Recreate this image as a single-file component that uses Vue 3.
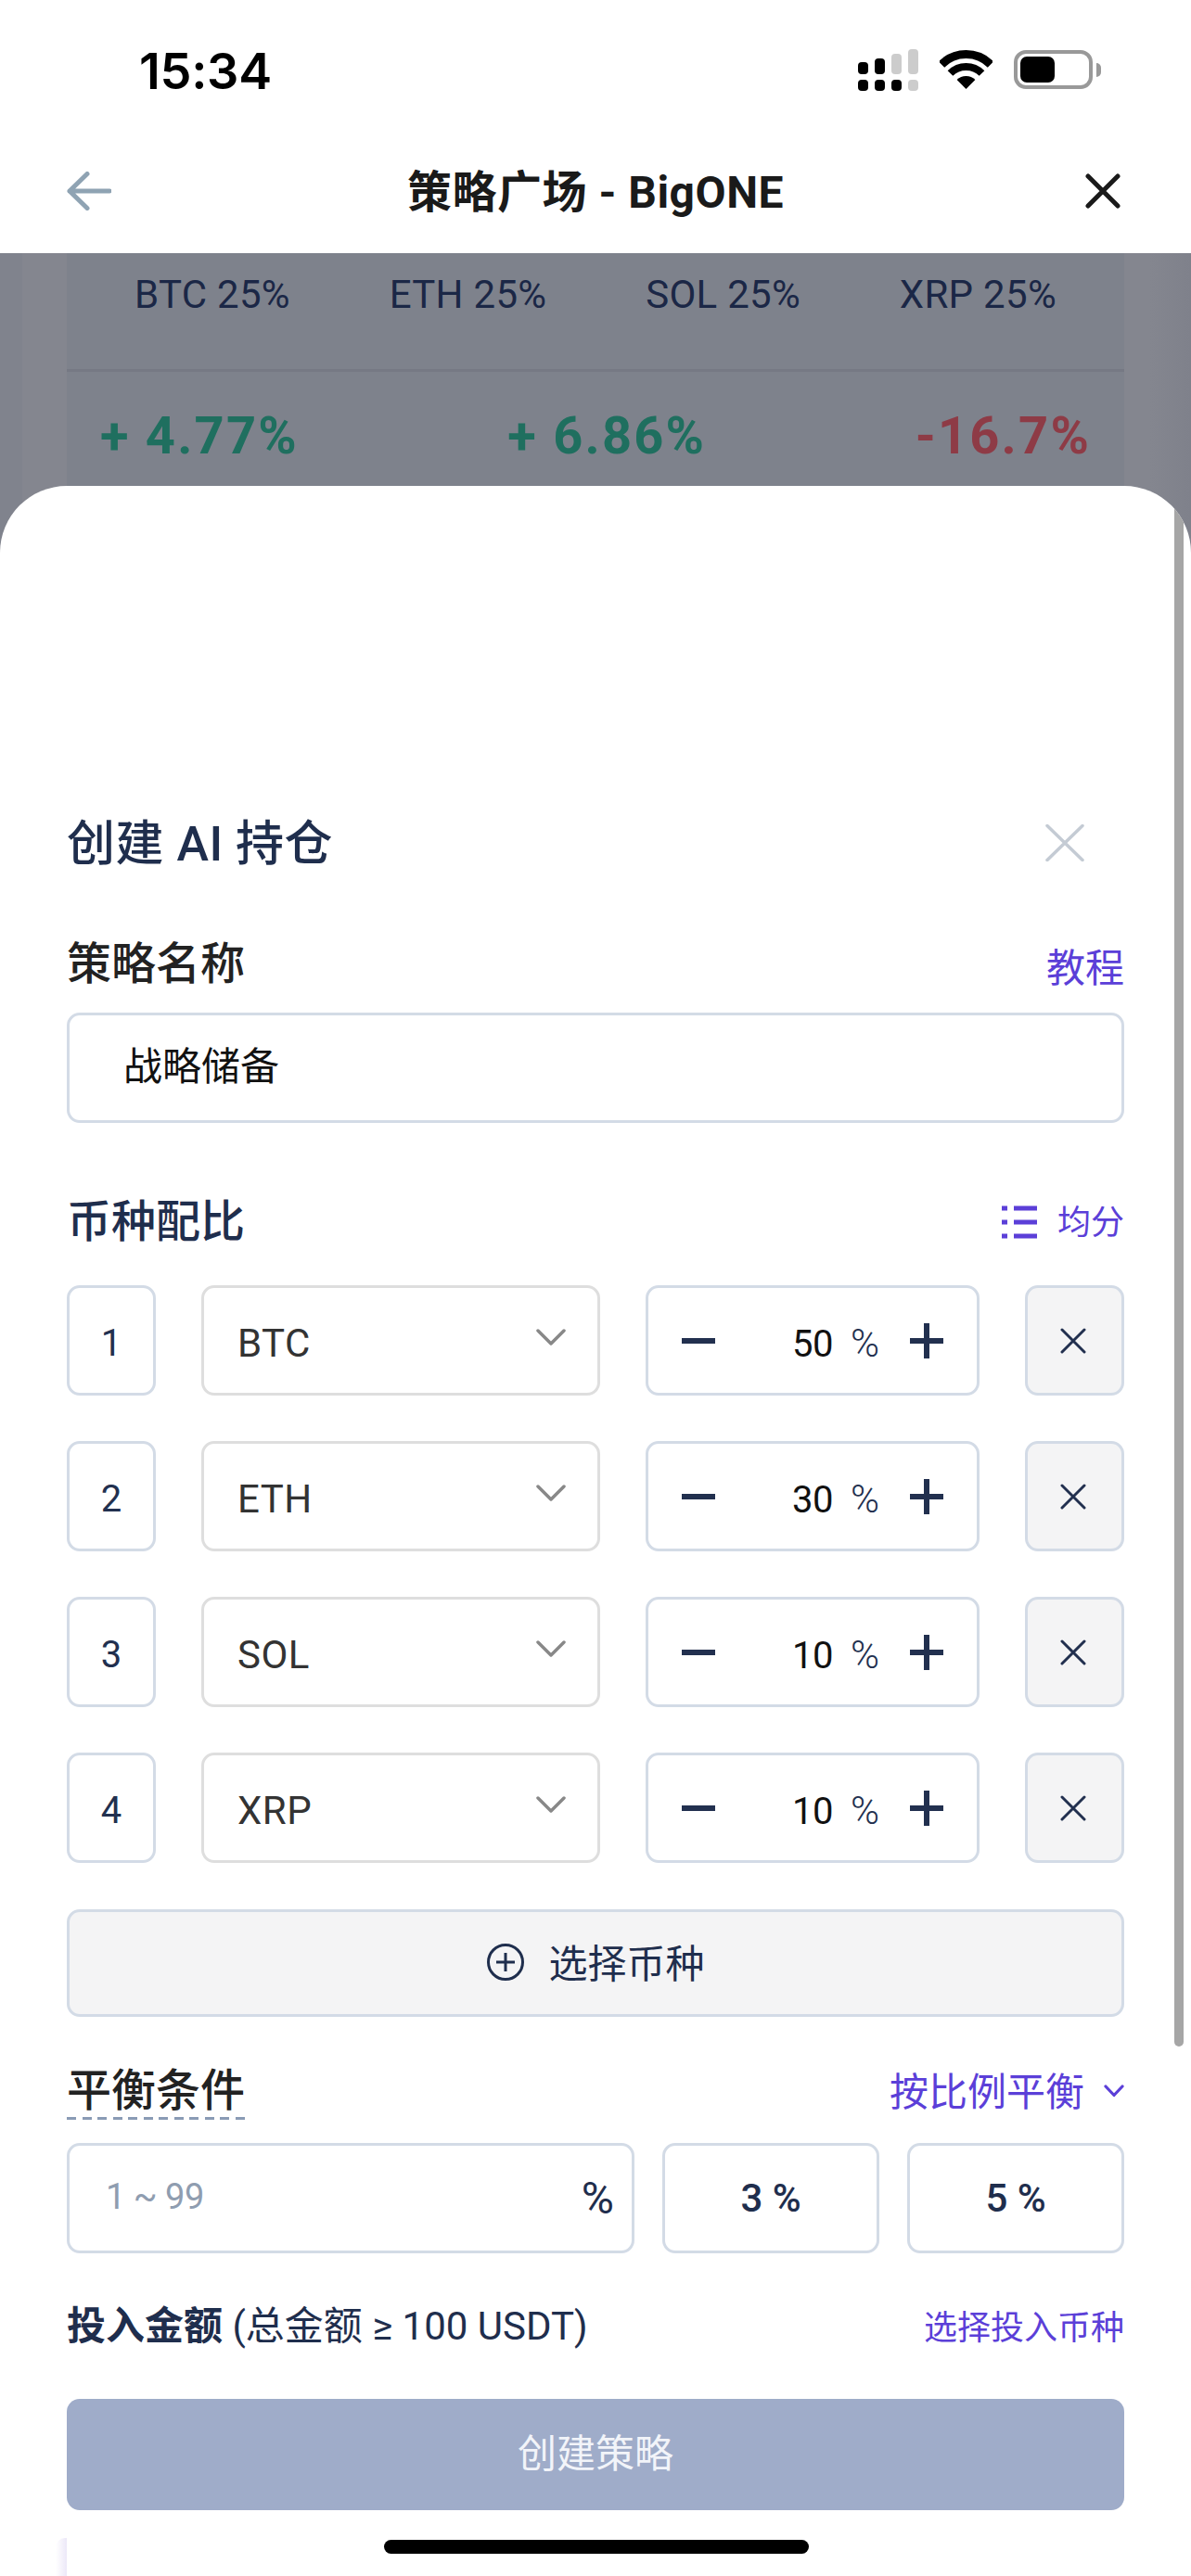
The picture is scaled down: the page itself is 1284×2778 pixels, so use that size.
<script setup>
const headers = ['BTC 25%', 'ETH 25%', 'SOL 25%', 'XRP 25%']
const returns = [
  { text: '+ 4.77%', up: true },
  { text: '+ 6.86%', up: true },
  { text: '-16.7%', up: false }
]
const coins = [
  { n: 1, name: 'BTC', pct: 50 },
  { n: 2, name: 'ETH', pct: 30 },
  { n: 3, name: 'SOL', pct: 10 },
  { n: 4, name: 'XRP', pct: 10 }
]
const signal = [
  { h: 13, on: true }, { h: 17, on: true }, { h: 22, on: false }, { h: 27, on: false }
]
const lower = [true, true, true, false]
</script>

<template>
  <div class="screen">
    <header class="top">
      <div class="status">
        <span class="time">15:34</span>
        <div class="status-icons">
          <div class="signal">
            <div v-for="(s, i) in signal" :key="i" class="sig-col">
              <i class="sig-top" :class="{ off: !s.on }" :style="{ height: s.h + 'px' }"></i>
              <i class="sig-bottom" :class="{ off: !lower[i] }"></i>
            </div>
          </div>
          <svg class="wifi" width="57" height="42" viewBox="0 0 57 42">
            <path d="M2 15.5A37.5 37.5 0 0 1 55 15.5" fill="none" stroke="#000" stroke-width="9" />
            <path d="M11.5 25A24 24 0 0 1 45.5 25" fill="none" stroke="#000" stroke-width="8" />
            <path d="M28.5 42L18.6 32.1A14 14 0 0 1 38.4 32.1Z" fill="#000" />
          </svg>
          <div class="battery">
            <div class="battery-body"><i class="battery-fill"></i></div>
            <i class="battery-nub"></i>
          </div>
        </div>
      </div>
      <div class="nav">
        <svg class="back" width="48" height="42" viewBox="0 0 48 42">
          <path d="M46 21H3M22 2.5L3 21l19 18.5" fill="none" stroke="#8fa3b3" stroke-width="5" stroke-linecap="round" stroke-linejoin="round" />
        </svg>
        <span class="nav-title">策略广场 - BigONE</span>
        <svg class="nav-close" width="38" height="38" viewBox="0 0 38 38">
          <path d="M3 3l32 32M35 3L3 35" stroke="#1a1a1a" stroke-width="5" stroke-linecap="round" />
        </svg>
      </div>
    </header>

    <section class="backdrop">
      <div class="back-table">
        <div class="th-row">
          <span v-for="h in headers" :key="h">{{ h }}</span>
        </div>
        <div class="td-row">
          <span v-for="r in returns" :key="r.text" :class="r.up ? 'up' : 'down'">{{ r.text }}</span>
        </div>
      </div>
    </section>

    <section class="sheet">
      <i class="scrollbar"></i>
      <div class="sheet-head">
        <h2>创建 AI 持仓</h2>
        <svg width="42" height="40" viewBox="0 0 42 40">
          <path d="M2 1.5l38 37M40 1.5l-38 37" stroke="#c4cbd4" stroke-width="3.5" stroke-linecap="round" />
        </svg>
      </div>

      <div class="label-row name-row">
        <span class="label dark">策略名称</span>
        <span class="link link-lg">教程</span>
      </div>
      <div class="box name-input">战略储备</div>

      <div class="label-row coin-row-head">
        <span class="label navy">币种配比</span>
        <span class="link even">
          <svg width="38" height="36" viewBox="0 0 38 36">
            <path d="M0 3h6M13 3h25M0 18h6M13 18h25M0 33h6M13 33h25" stroke="#5b3fd8" stroke-width="5" />
          </svg>
          <span class="even-text">均分</span>
        </span>
      </div>

      <div class="coins">
        <div v-for="c in coins" :key="c.n" class="coin">
          <div class="box center idx">{{ c.n }}</div>
          <div class="box select">
            <span class="coin-name">{{ c.name }}</span>
            <svg width="32" height="18" viewBox="0 0 32 18">
              <path d="M2 2l14 14L30 2" fill="none" stroke="#888" stroke-width="3.5" stroke-linecap="round" stroke-linejoin="round" />
            </svg>
          </div>
          <div class="box stepper">
            <svg width="36" height="6" viewBox="0 0 36 6"><rect width="36" height="6" fill="#22304f" /></svg>
            <span class="value">{{ c.pct }}<em>%</em></span>
            <svg width="36" height="38" viewBox="0 0 36 38">
              <path d="M0 19h36M18 0v38" stroke="#22304f" stroke-width="6" />
            </svg>
          </div>
          <div class="box center remove">
            <svg width="28" height="28" viewBox="0 0 28 28">
              <path d="M2 2l24 24M26 2L2 26" stroke="#22304f" stroke-width="3" stroke-linecap="round" />
            </svg>
          </div>
        </div>
      </div>

      <div class="box center add">
        <svg width="40" height="40" viewBox="0 0 40 40">
          <circle cx="20" cy="20" r="18.5" fill="none" stroke="#1f2e4d" stroke-width="3" />
          <path d="M20 10v20M10 20h20" stroke="#1f2e4d" stroke-width="3" />
        </svg>
        <span class="add-text">选择币种</span>
      </div>

      <div class="label-row balance-head">
        <span class="label dark dashed">平衡条件</span>
        <span class="link link-lg ratio">
          <span class="ratio-text">按比例平衡</span>
          <svg width="22" height="14" viewBox="0 0 22 14">
            <path d="M2 2l9 9.5L20 2" fill="none" stroke="#5b3fd8" stroke-width="3.2" stroke-linecap="round" stroke-linejoin="round" />
          </svg>
        </span>
      </div>
      <div class="balance">
        <div class="box range">
          <span class="placeholder">1 ~ 99</span>
          <span class="unit">%</span>
        </div>
        <div class="box center preset">3 %</div>
        <div class="box center preset">5 %</div>
      </div>

      <div class="label-row invest">
        <span class="invest-text"><b>投入金额</b> (总金额 ≥ 100 USDT)</span>
        <span class="link link-sm invest-link">选择投入币种</span>
      </div>

      <div class="submit">创建策略</div>
    </section>

    <i class="glow"></i>
    <i class="home-bar"></i>
  </div>
</template>

<style>
html, body { margin: 0; background: #fff; }
</style>

<style scoped>
.screen {
  position: relative;
  width: 1284px;
  height: 2778px;
  overflow: hidden;
  background: linear-gradient(90deg, #80838d 0, #80838d 24px, #84868f 24px, #84868f 1212px, #84868f 1240px, #7f818b 100%);
  font-family: Roboto, "Noto Sans CJK SC", sans-serif;
  color: #1f2e4d;
}
.top { height: 273px; background: #fff; }
.status { height: 148px; display: flex; justify-content: space-between; }
.time {
  margin: 44px 0 0 150px;
  font: 600 54px/66px Inter, "Liberation Sans", sans-serif;
  color: #000;
  letter-spacing: -0.3px;
}
.status-icons { display: flex; align-items: flex-start; margin: 53px 97px 0 0; }
.signal { display: flex; gap: 7px; width: 65px; }
.sig-col { width: 11px; height: 45px; display: flex; flex-direction: column; justify-content: flex-end; gap: 6px; }
.sig-top, .sig-bottom { display: block; background: #000; border-radius: 4px; }
.sig-bottom { height: 12px; }
.off { background: #ccc; }
.wifi { margin: 1px 0 0 23px; }
.battery { display: flex; align-items: center; margin: 1px 0 0 23px; }
.battery-body {
  box-sizing: border-box;
  width: 85px;
  height: 42px;
  border: 4px solid #999;
  border-radius: 13px;
  padding: 3px;
}
.battery-fill { display: block; width: 37px; height: 28px; background: #000; border-radius: 7px; }
.battery-nub { display: block; width: 5px; height: 15px; margin-left: 4px; background: #999; border-radius: 0 8px 8px 0; }

.nav { position: relative; height: 125px; display: flex; align-items: center; justify-content: center; }
.back { position: absolute; left: 72px; top: 37px; }
.nav-close { position: absolute; left: 1170px; top: 39px; }
.nav-title { font-size: 48px; font-weight: 700; color: #1a1a1a; line-height: 60px; margin-top: -5px; letter-spacing: 0.5px; }

.backdrop { height: 251px; }
.back-table { margin: 0 72px; height: 251px; background: #7e828c; }
.th-row {
  box-sizing: border-box;
  height: 128px;
  padding: 20px 73px 0;
  display: flex;
  justify-content: space-between;
  font-size: 42px;
  line-height: 50px;
  letter-spacing: 0.3px;
  color: #1b2746;
  border-bottom: 3px solid #767984;
}
.td-row {
  padding: 37px 36px 0;
  display: flex;
  justify-content: space-between;
  font-size: 56px;
  font-weight: 700;
  line-height: 64px;
  letter-spacing: 2.2px;
}
.up { color: #1f6f5f; }
.down { color: #8e3b46; }

.sheet {
  position: relative;
  box-sizing: border-box;
  height: 2254px;
  padding: 351px 72px 0;
  background: #fff;
  border-radius: 72px 72px 0 0;
  overflow: hidden;
}
.scrollbar {
  position: absolute;
  top: 0;
  right: 8px;
  width: 10px;
  height: 1683px;
  background: #a6a6a6;
  border-radius: 0 0 5px 5px;
}
.sheet-head { display: flex; justify-content: space-between; align-items: center; height: 72px; padding-right: 43px; }
.sheet-head svg { margin-top: -4px; }
.sheet-head h2 { margin: 0; font-size: 52px; font-weight: 500; line-height: 72px; letter-spacing: 0.5px; color: #1f2e4d; }

.label-row { display: flex; justify-content: space-between; align-items: center; height: 60px; }
.label { font-size: 48px; font-weight: 500; line-height: 60px; }
.dark { color: #222; }
.navy { color: #1f2e4d; }
.link { color: #5b3fd8; display: flex; align-items: center; }
.link-lg { font-size: 42px; }
.link-sm { font-size: 36px; }
.name-row { margin-top: 63px; }
.box {
  box-sizing: border-box;
  height: 119px;
  border: 3px solid #d3dbe6;
  border-radius: 14px;
  background: #fff;
}
.center { display: flex; align-items: center; justify-content: center; }
.name-input {
  margin-top: 22px;
  padding-left: 58px;
  font-size: 42px;
  line-height: 112px;
  color: #111;
}
.coin-row-head { margin-top: 77px; }
.even { font-size: 36px; gap: 22px; }
.even-text { margin-top: -6px; }

.coins { margin-top: 38px; display: flex; flex-direction: column; gap: 49px; }
.coin { display: grid; grid-template-columns: 96px 430px 360px 107px; column-gap: 49px; }
.idx { padding-top: 6px; font-size: 40px; color: #22304f; }
.select {
  border-color: #dedede;
  display: flex;
  align-items: center;
  justify-content: space-between;
  padding: 0 34px 0 36px;
  font-size: 42px;
  color: #333;
  letter-spacing: 0.5px;
}
.coin-name { margin-top: 6px; }
.select svg { margin-top: -8px; }
.stepper { display: flex; align-items: center; padding: 0 36px; }
.value { margin-left: auto; margin-right: 33px; margin-top: 6px; font-size: 40px; letter-spacing: -0.5px; color: #111; }
.value em { font-style: normal; font-size: 42px; font-weight: 300; letter-spacing: 0; color: #22304f; margin-left: 19px; }
.remove { background: #f4f4f5; padding-right: 3px; }

.add { margin-top: 50px; height: 116px; background: #f4f4f5; gap: 26px; font-size: 42px; color: #1f2e4d; }
.add svg { margin: -3px 0 0 1px; }
.add-text { margin-top: -6px; }

.balance-head { margin-top: 52px; height: 59px; }
.dashed {
  line-height: 56px;
  padding-bottom: 3px;
  background: repeating-linear-gradient(90deg, #8a9bb5 0 10px, transparent 10px 16.55px) left bottom / 100% 3px no-repeat;
}
.ratio { gap: 21px; }
.ratio-text { margin-top: -8px; }
.ratio svg { margin-top: -3px; }
.balance { margin-top: 25px; display: grid; grid-template-columns: 612px 234px 234px; column-gap: 30px; }
.range { display: flex; align-items: center; justify-content: space-between; padding: 0 19px 0 39px; }
.placeholder { font-size: 38px; letter-spacing: -0.5px; margin-top: -3px; color: #8f9db0; }
.unit { font-size: 48px; color: #1f2e4d; }
.preset { font-size: 42px; font-weight: 500; color: #1f2e4d; }

.invest { margin-top: 44px; }
.invest-text { font-size: 42px; color: #1f2e4d; }
.invest-text b { font-weight: 700; }
.invest-link { margin-top: 6px; }

.submit {
  margin-top: 53px;
  height: 120px;
  border-radius: 14px;
  background: #9facc9;
  color: #f2f4f9;
  font-size: 42px;
  line-height: 120px;
  text-align: center;
}

.home-bar {
  position: absolute;
  left: 414px;
  top: 2739px;
  width: 458px;
  height: 15px;
  background: #000;
  border-radius: 8px;
}
.glow {
  position: absolute;
  left: 60px;
  top: 2737px;
  width: 12px;
  height: 41px;
  background: linear-gradient(90deg, #fff, #ece8f8);
  border-radius: 10px 0 0 0;
}
</style>
